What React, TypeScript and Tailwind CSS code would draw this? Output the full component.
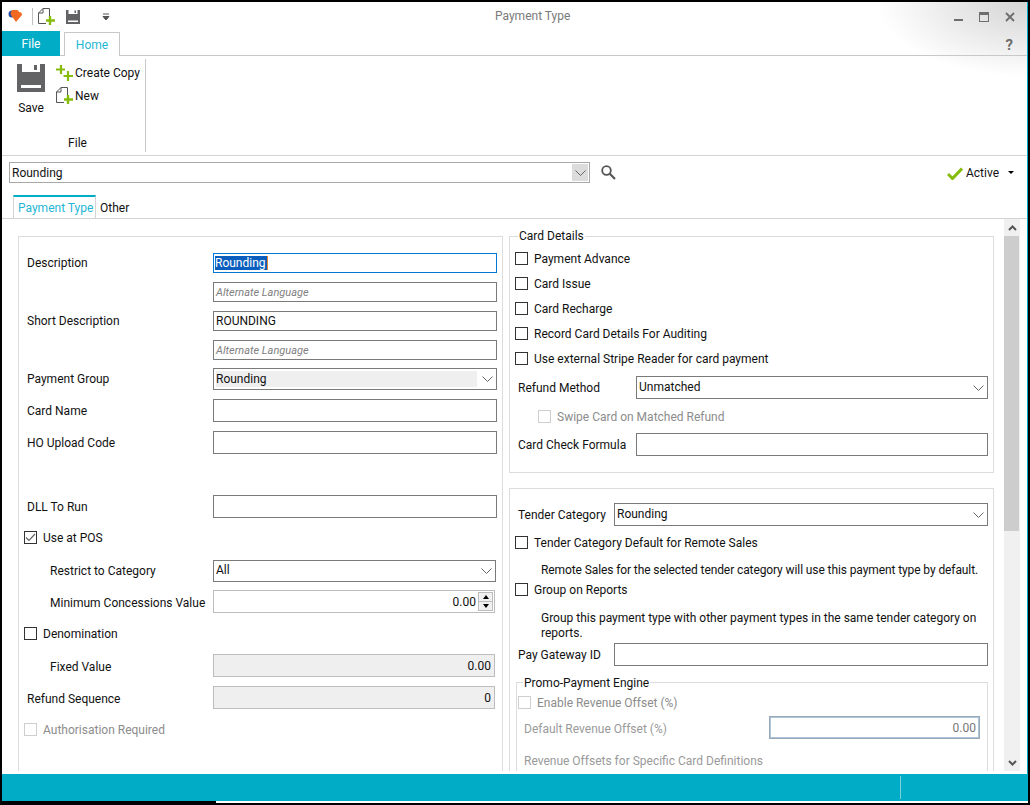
const font = { fontFamily: 'Roboto, "Open Sans", sans-serif' };

function Chevron({ className = "" }: { className?: string }) {
  return (
    <svg width="11" height="6" viewBox="0 0 11 6" className={className}>
      <path d="M0.5 0.5 L5.5 5.5 L10.5 0.5" fill="none" stroke="#666" strokeWidth="1" />
    </svg>
  );
}

function Check({ checked = false, disabled = false }: { checked?: boolean; disabled?: boolean }) {
  return (
    <span className={`flex h-[13px] w-[13px] shrink-0 items-center justify-center border bg-white ${disabled ? "border-[#cfcfcf]" : "border-[#333]"}`}>
      {checked && (
        <svg width="11" height="9" viewBox="0 0 11 9">
          <path d="M1 4.5 L4 7.5 L10 1" fill="none" stroke="#666" strokeWidth="1.2" />
        </svg>
      )}
    </span>
  );
}

function Input({ text = "", alt = false, className = "" }: { text?: string; alt?: boolean; className?: string }) {
  return (
    <div className={`flex items-center border border-[#7a7a7a] bg-white pl-[2px] ${className}`}>
      {alt ? <span className="pt-[2px] text-[11px] italic text-[#808080]">{text}</span> : text}
    </div>
  );
}

function Select({ text, className = "" }: { text: string; className?: string }) {
  return (
    <div className={`flex items-center justify-between border border-[#7a7a7a] bg-white pl-[2px] pr-[3px] ${className}`}>
      <span className="pb-[2px]">{text}</span>
      <Chevron />
    </div>
  );
}

function Row({ label, className = "", labelClass = "", children }: { label: string; className?: string; labelClass?: string; children: React.ReactNode }) {
  return (
    <div className={`flex items-center ${className}`}>
      <span className={`w-[194px] shrink-0 pl-[8px] ${labelClass}`}>{label}</span>
      {children}
    </div>
  );
}

function Sub({ label, className = "", labelClass = "", children }: { label: string; className?: string; labelClass?: string; children: React.ReactNode }) {
  return (
    <div className={`flex items-center ${className}`}>
      <span className={`w-[194px] shrink-0 pl-[31px] ${labelClass}`}>{label}</span>
      {children}
    </div>
  );
}

function CheckRow({ label, checked, disabled, className = "" }: { label: string; checked?: boolean; disabled?: boolean; className?: string }) {
  return (
    <div className={`flex h-[13px] items-center gap-[6px] ${className}`}>
      <Check checked={checked} disabled={disabled} />
      <span className={disabled ? "text-[#8c8c8c]" : ""}>{label}</span>
    </div>
  );
}

function Legend({ text, className = "" }: { text: string; className?: string }) {
  return <span className={`absolute bg-white px-[1px] leading-[16px] ${className}`}>{text}</span>;
}

function SaveIcon({ size, color = "#636366" }: { size: number; color?: string }) {
  return (
    <svg width={size} height={size} viewBox="0 0 28 28">
      <path d="M0 0H28V28H0Z" fill={color} />
      <path d="M5 0H23V8H5Z" fill="#fff" />
      <path d="M17 1H20V6H17Z" fill={color} />
      <path d="M4 21H24V24H4Z" fill="#fff" />
    </svg>
  );
}

function NewIcon({ className = "" }: { className?: string }) {
  return (
    <svg width="18" height="18" viewBox="0 0 18 18" className={className}>
      <path d="M0.5 5 L5 0.5 H11.5 V10 M8 15.5 H0.5 V5 M5 0.5 V5 H0.5" fill="none" stroke="#555" strokeWidth="1" />
      <path d="M12 8 V17 M8 12.5 H17" stroke="#86bc0c" strokeWidth="2.4" />
    </svg>
  );
}

function LeftPanel() {
  return (
    <div className="h-[600px] w-[485px] shrink-0 border border-[#dcdcdc] pr-[5px] pt-[16px]">
      <Row label="Description" className="h-[20px]">
        <div className="flex h-[20px] w-[284px] items-center border border-[#0078d7] bg-white pl-[1px]">
          <span className="bg-[#0a5ebd] pr-[1px] leading-[14px] text-white">Rounding</span>
          <span className="h-[14px] w-px bg-[#e8852a]" />
        </div>
      </Row>
      <Row label="" className="mt-[9px] h-[20px]"><Input alt text="Alternate Language" className="h-[20px] w-[284px]" /></Row>
      <Row label="Short Description" className="mt-[9px] h-[20px]"><Input text="ROUNDING" className="h-[20px] w-[284px]" /></Row>
      <Row label="" className="mt-[9px] h-[20px]"><Input alt text="Alternate Language" className="h-[20px] w-[284px]" /></Row>
      <Row label="Payment Group" className="mt-[8px] h-[22px]">
        <div className="flex h-[22px] w-[284px] items-center justify-between border border-[#7a7a7a] bg-white py-[2px] pl-[2px] pr-[3px]">
          <span className="flex h-full w-[261px] items-center bg-[#efefef]">Rounding</span>
          <Chevron />
        </div>
      </Row>
      <Row label="Card Name" className="mt-[9px] h-[23px]"><Input className="h-[23px] w-[284px]" /></Row>
      <Row label="HO Upload Code" className="mt-[9px] h-[23px]"><Input className="h-[23px] w-[284px]" /></Row>
      <Row label="DLL To Run" className="mt-[41px] h-[23px]"><Input className="h-[23px] w-[284px]" /></Row>
      <CheckRow label="Use at POS" checked className="ml-[5px] mt-[13px]" />
      <Sub label="Restrict to Category" className="mt-[16px] h-[22px]"><Select text="All" className="h-[22px] w-[283px]" /></Sub>
      <Sub label="Minimum Concessions Value" labelClass="pt-[2px]" className="mt-[8px] h-[23px]">
        <div className="flex h-[23px] w-[282px] items-center justify-end border border-[#bdbdbd] bg-white pr-[1px]">
          <span className="mr-[2px]">0.00</span>
          <div className="flex h-[19px] w-[15px] flex-col border border-[#bdbdbd] bg-[#f0f0f0]">
            <div className="flex flex-1 items-center justify-center border-b border-[#bdbdbd]">
              <span className="h-0 w-0 border-x-[3.5px] border-b-[4px] border-x-transparent border-b-black" />
            </div>
            <div className="flex flex-1 items-center justify-center">
              <span className="h-0 w-0 border-x-[3.5px] border-t-[4px] border-x-transparent border-t-black" />
            </div>
          </div>
        </div>
      </Sub>
      <CheckRow label="Denomination" className="ml-[5px] mt-[14px]" />
      <Sub label="Fixed Value" labelClass="pt-[2px]" className="mt-[14px] h-[23px]">
        <div className="flex h-[23px] w-[282px] items-center justify-end border border-[#bdbdbd] bg-[#efefef] pr-[3px]">0.00</div>
      </Sub>
      <Row label="Refund Sequence" labelClass="pt-[2px]" className="mt-[9px] h-[23px]">
        <div className="flex h-[23px] w-[282px] items-center justify-end border border-[#bdbdbd] bg-[#efefef] pr-[3px]">0</div>
      </Row>
      <CheckRow label="Authorisation Required" disabled className="ml-[5px] mt-[14px]" />
    </div>
  );
}

function CardDetails() {
  return (
    <div className="relative h-[237px] border border-[#dcdcdc] pl-[5px] pr-[5px] pt-[15px]">
      <Legend text="Card Details" className="left-[8px] top-[-9px]" />
      <div className="flex flex-col gap-[12px]">
        <CheckRow label="Payment Advance" />
        <CheckRow label="Card Issue" />
        <CheckRow label="Card Recharge" />
        <CheckRow label="Record Card Details For Auditing" />
        <CheckRow label="Use external Stripe Reader for card payment" />
      </div>
      <div className="mt-[11px] flex h-[23px] items-center">
        <span className="w-[121px] shrink-0 pl-[3px]">Refund Method</span>
        <Select text="Unmatched" className="h-[23px] w-[352px]" />
      </div>
      <CheckRow label="Swipe Card on Matched Refund" disabled className="ml-[23px] mt-[11px]" />
      <div className="mt-[10px] flex h-[23px] items-center">
        <span className="w-[121px] shrink-0 pl-[3px]">Card Check Formula</span>
        <Input className="h-[23px] w-[352px]" />
      </div>
    </div>
  );
}

function Tender() {
  return (
    <div className="mt-[15px] h-[400px] border border-[#dcdcdc] pl-[5px] pr-[5px] pt-[14px]">
      <div className="flex h-[23px] items-center">
        <span className="w-[99px] shrink-0 pl-[3px]">Tender Category</span>
        <Select text="Rounding" className="h-[23px] w-[374px]" />
      </div>
      <CheckRow label="Tender Category Default for Remote Sales" className="mt-[10px]" />
      <p className="ml-[26px] mt-[13px] h-[16px] whitespace-nowrap leading-[16px] tracking-[-0.1px]">Remote Sales for the selected tender category will use this payment type by default.</p>
      <CheckRow label="Group on Reports" className="mt-[5px]" />
      <p className="ml-[26px] mt-[15px] w-[440px] leading-[15px]">Group this payment type with other payment types in the same tender category on reports.</p>
      <div className="mt-[2px] flex h-[23px] items-center">
        <span className="w-[99px] shrink-0 pl-[3px]">Pay Gateway ID</span>
        <Input className="h-[23px] w-[374px]" />
      </div>
      <div className="relative ml-[1px] mt-[16px] h-[120px] w-[472px] border border-[#dcdcdc] pl-[1px] pt-[13px]">
        <Legend text="Promo-Payment Engine" className="left-[6px] top-[-8px]" />
        <CheckRow label="Enable Revenue Offset (%)" disabled />
        <div className="mt-[7px] flex h-[23px] items-center text-[#9a9a9a]">
          <span className="w-[251px] shrink-0 pl-[6px] pt-[2px]">Default Revenue Offset (%)</span>
          <div className="flex h-[23px] w-[211px] items-center justify-end border-2 border-[#adc6e0] bg-white pr-[2px] text-[#777] outline outline-1 -outline-offset-1 outline-[#9aa7b5]">0.00</div>
        </div>
        <div className="mt-[14px] pl-[6px] text-[#9a9a9a]">Revenue Offsets for Specific Card Definitions</div>
      </div>
    </div>
  );
}

export default function App() {
  return (
    <div style={font} className="h-[805px] w-[1030px] overflow-hidden bg-black pl-[2px] pr-[2px] pt-[2px] text-[12px] leading-[16px] text-[#111]">
      <div className="flex h-[799px] w-[1026px] flex-col border-r border-[#00acc6] bg-white">
        <div className="h-[153px] shrink-0 bg-[radial-gradient(ellipse_150px_75px_at_100%_0px,#d4d4d4,#ffffff)]">
          <div className="relative flex h-[29px] items-center">
            <svg width="15" height="13" viewBox="0 0 15 13" className="ml-[6px]">
              <circle cx="4" cy="4" r="3.5" fill="#2a4fa0" />
              <path d="M3 5 a4 4 0 0 1 8-3 a3 3 0 0 1 3 3 L8 12 Z" fill="#f26a21" />
            </svg>
            <div className="ml-[9px] h-[17px] w-px bg-[#c0c0c0]" />
            <NewIcon className="ml-[5px]" />
            <div className="ml-[10px]"><SaveIcon size={14} /></div>
            <svg width="8" height="8" viewBox="0 0 8 8" className="ml-[22px]">
              <path d="M1 1 H7 M1 3.5 H7 L4 7 Z" stroke="#555" fill="#555" strokeWidth="1" />
            </svg>
            <span className="absolute left-[493px] top-[6px] text-[#7a7a7a]">Payment Type</span>
            <div className="ml-auto mr-[12px] flex items-center gap-[16px]">
              <span className="mt-[7px] h-[2px] w-[9px] bg-[#6e6e6e]" />
              <span className="h-[10px] w-[10px] border border-t-[3px] border-[#6e6e6e]" />
              <svg width="10" height="10" viewBox="0 0 10 10"><path d="M1 1 L9 9 M9 1 L1 9" stroke="#6e6e6e" strokeWidth="1.8" /></svg>
            </div>
          </div>
          <div className="flex h-[25px] items-end border-b border-[#c8c8c8]">
            <div className="mb-[-1px] flex h-[25px] w-[58px] items-center justify-center bg-[#00acc6] text-white">File</div>
            <div className="mb-[-1px] ml-[4px] flex h-[24px] w-[56px] items-center justify-center border-x border-t border-[#c8c8c8] bg-white text-[#1fb6d4]">Home</div>
            <span className="ml-auto mb-[2px] mr-[14px] text-[15px] font-bold leading-[16px] text-[#6e6e6e]">?</span>
          </div>
          <div className="flex h-[99px] pt-[3px]">
            <div className="flex h-[93px] w-[144px] flex-col border-r border-[#c8c8c8]">
              <div className="flex h-[74px]">
                <div className="ml-[15px] flex w-[28px] flex-col items-center pt-[5px]">
                  <SaveIcon size={28} />
                  <span className="mt-[8px]">Save</span>
                </div>
                <div className="ml-[11px] flex flex-col pt-[5px]">
                  <div className="flex h-[18px] items-center">
                    <svg width="18" height="16" viewBox="0 0 18 16">
                      <path d="M5 0 V9 M0 4.5 H9 M12 6 V16 M7.500 11 H17" stroke="#86bc0c" strokeWidth="2.2" fill="none" />
                    </svg>
                    <span className="ml-[1px]">Create Copy</span>
                  </div>
                  <div className="mt-[5px] flex h-[18px] items-center">
                    <NewIcon />
                    <span className="ml-[1px]">New</span>
                  </div>
                </div>
              </div>
              <div className="flex justify-center pl-[8px] pt-[2px]">File</div>
            </div>
          </div>
        </div>
        <div className="h-[40px] shrink-0 border-t border-[#d4d4d4] bg-white">
          <div className="mt-[6px] flex h-[21px] items-center">
            <div className="ml-[7px] flex h-[21px] w-[581px] items-center justify-between border border-[#a8a8a8] pl-[2px] pr-px">
              <span>Rounding</span>
              <span className="flex h-[17px] w-[16px] items-center justify-center bg-[#dcdcdc]"><Chevron /></span>
            </div>
            <svg width="15" height="15" viewBox="0 0 15 15" className="ml-[11px]">
              <circle cx="5.500" cy="5.500" r="4.300" fill="none" stroke="#555" strokeWidth="1.8" />
              <path d="M8.800 8.800 L14 14" stroke="#555" strokeWidth="2.2" />
            </svg>
            <div className="ml-auto mr-[13px] flex items-center">
              <svg width="16" height="14" viewBox="0 0 16 14"><path d="M1 8 L5.500 12.500 L15 2.500" fill="none" stroke="#86bc0c" strokeWidth="3" /></svg>
              <span className="ml-[3px]">Active</span>
              <span className="ml-[9px] h-0 w-0 border-x-[3px] border-t-[3px] border-x-transparent border-t-black" />
            </div>
          </div>
        </div>
        <div className="flex h-[23px] shrink-0 items-end pl-[11px]">
          <div className="mb-[-1px] h-[24px] w-[83px] whitespace-nowrap border-x border-t-[2px] border-x-[#d4d4d4] border-t-[#00acc6] bg-white pl-[4px] pt-[3px] text-[#1fb6d4]">Payment Type</div>
          <span className="mb-[2px] ml-[4px]">Other</span>
        </div>
        <div className="flex min-h-0 flex-1 flex-col">
          <div className="relative flex h-[553px] overflow-hidden border-t border-[#d4d4d4]">
            <div className="ml-[16px] mt-[17px] flex gap-[6px]">
              <LeftPanel />
              <div className="w-[485px] shrink-0">
                <CardDetails />
                <Tender />
              </div>
            </div>
            <div className="ml-auto mr-[7px] flex h-full w-[16px] shrink-0 flex-col bg-[#f0f0f0]">
              <div className="flex h-[17px] items-center justify-center">
                <svg width="9" height="6" viewBox="0 0 9 6"><path d="M1 5 L4.500 1.500 L8 5" fill="none" stroke="#555" strokeWidth="2" /></svg>
              </div>
              <div className="h-[295px] w-[15px] bg-[#cdcdcd]" />
              <div className="mt-auto flex h-[17px] items-center justify-center">
                <svg width="9" height="6" viewBox="0 0 9 6"><path d="M1 1 L4.500 4.500 L8 1" fill="none" stroke="#555" strokeWidth="2" /></svg>
              </div>
            </div>
          </div>
          <div className="mt-[3px] flex h-[27px] items-center justify-end bg-[#00acc6] pr-[126px]">
            <span className="h-[23px] w-px bg-[#7ccfde]" />
          </div>
        </div>
      </div>
      <div className="flex h-[2px] w-[1026px]">
        <div className="h-full w-[214px] bg-black" />
        <div className="h-full flex-1 bg-white" />
      </div>
    </div>
  );
}
